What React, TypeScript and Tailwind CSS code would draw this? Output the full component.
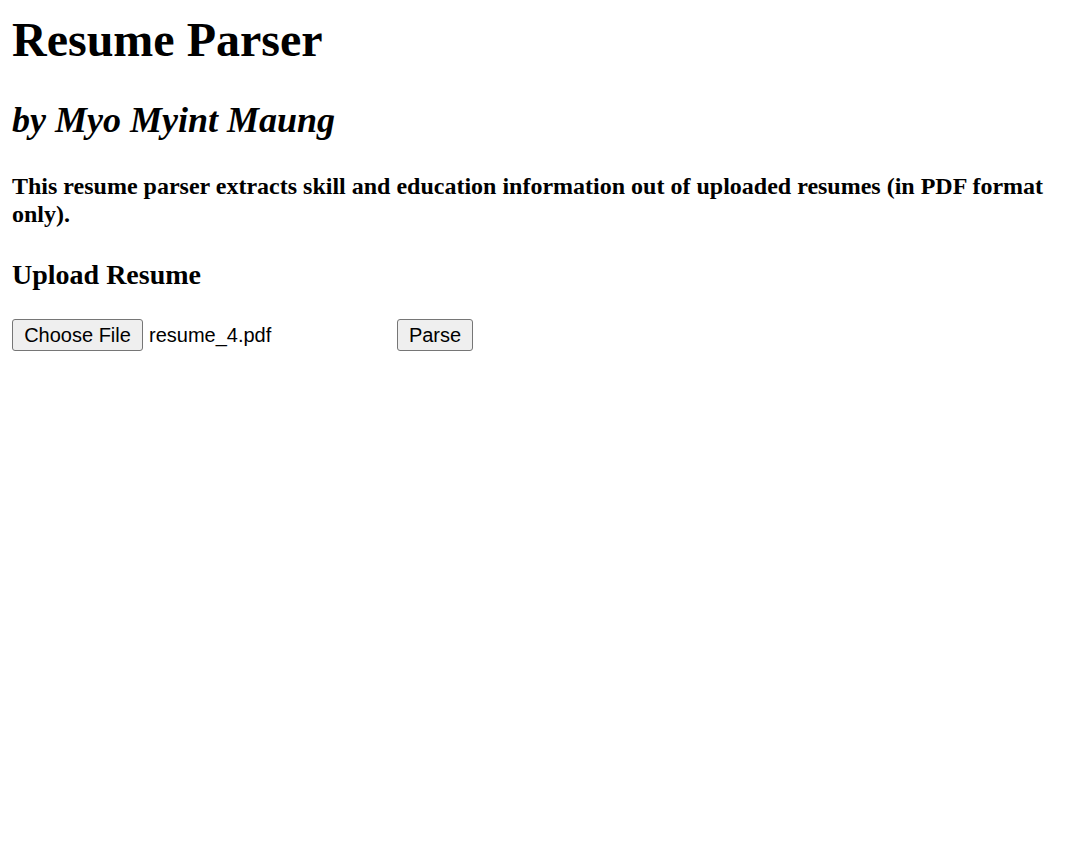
import React from "react";

const App: React.FC = () => {
	const [fileName] = React.useState("resume_4.pdf");

	return (
		<div className="min-h-screen bg-white p-[12px] text-black font-['Liberation_Serif','Times_New_Roman',serif]">
			<h1 className="mb-[33px] text-[48px] leading-[55px] font-bold">Resume Parser</h1>
			<h2 className="mb-[32px] text-[36px] leading-[41px] font-bold italic">by Myo Myint Maung</h2>
			<h4 className="mb-[31px] text-[24px] leading-[27.6px] font-bold">
				This resume parser extracts skill and education information out of uploaded resumes (in PDF format only).
			</h4>
			<h3 className="mb-[28px] text-[28px] leading-[32px] font-bold">Upload Resume</h3>
			<form
				className="flex h-[32px] items-center font-['Liberation_Sans',Arial,sans-serif] text-[20px]"
				onSubmit={(e) => e.preventDefault()}>
				<div className="flex w-[385px] items-center">
					<button
						type="button"
						className="flex h-[32px] w-[131px] items-center justify-center rounded-[3px] border border-[#767676] bg-[#efefef] leading-none">
						Choose File
					</button>
					<span className="ml-[6px] leading-none">{fileName}</span>
				</div>
				<button
					type="submit"
					className="flex h-[32px] w-[76px] items-center justify-center rounded-[3px] border border-[#767676] bg-[#efefef] leading-none">
					Parse
				</button>
			</form>
		</div>
	);
};

export default App;
